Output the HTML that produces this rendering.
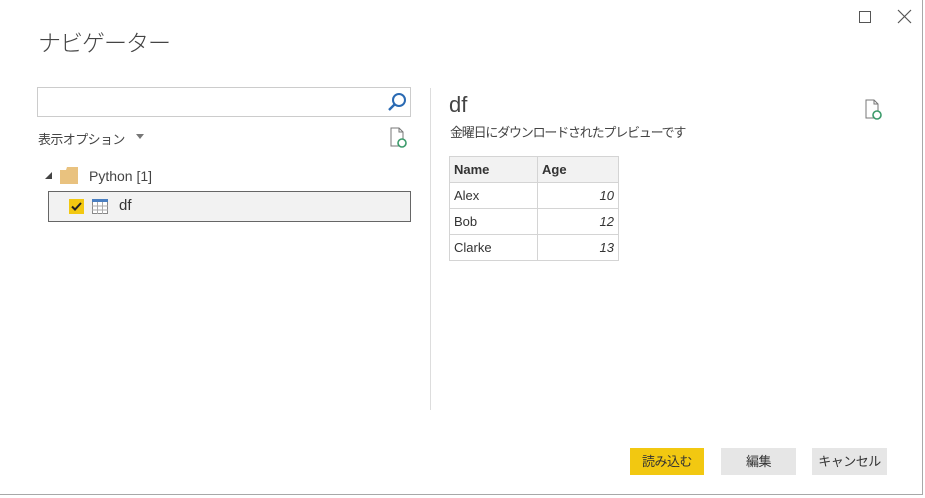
<!DOCTYPE html>
<html><head><meta charset="utf-8"><style>
*{margin:0;padding:0;box-sizing:border-box}
body{width:925px;height:498px;background:#fff;position:relative;overflow:hidden;font-family:"Liberation Sans","Noto Sans CJK JP",sans-serif;color:#333}
.a{position:absolute}
.win{left:0;top:0;width:923px;height:495px;border-right:1px solid #a8a8a8;border-bottom:1px solid #a8a8a8}
.title{left:38px;top:24px;font-size:23px;color:#444;font-weight:300;letter-spacing:-1px;white-space:nowrap}
.search{left:37px;top:87px;width:374px;height:30px;border:1px solid #ccc}
.btn{top:448px;height:27px;font-size:13px;text-align:center;line-height:27px;background:#e6e6e6;color:#333;letter-spacing:-0.5px}
table{border-collapse:collapse;font-size:13px}
td,th{border:1px solid #d4d4d4;height:26px;padding:0 4px;text-align:left}
th{background:#f2f2f2;font-weight:bold}
td.n{text-align:right;font-style:italic}
</style></head><body>
<div class="a win"></div>
<div class="a" style="left:859px;top:11px;width:12px;height:12px;border:1px solid #555"></div>
<svg class="a" style="left:897px;top:9px" width="15" height="15"><path d="M1 1L14 14M14 1L1 14" stroke="#555" stroke-width="1.2"/></svg>
<div class="a title">ナビゲーター</div>
<div class="a search"></div>
<svg class="a" style="left:387px;top:92px" width="20" height="20"><circle cx="12" cy="8" r="6" fill="none" stroke="#2a6ab3" stroke-width="2"/><path d="M8 12L2 18" stroke="#2a6ab3" stroke-width="2.4"/></svg>
<div class="a" style="left:38px;top:129px;font-size:13px;color:#444;letter-spacing:-0.6px">表示オプション</div>
<svg class="a" style="left:136px;top:134px" width="9" height="6"><path d="M0 0H8L4 5Z" fill="#777"/></svg>
<svg class="a" style="left:388px;top:127px" width="22" height="22"><path d="M3 1H11L15 5V19H3Z" fill="none" stroke="#777"/><path d="M11 1V5H15" fill="none" stroke="#777"/><circle cx="14" cy="16" r="4" fill="#fff" stroke="#3a9a6a" stroke-width="1.6"/></svg>
<svg class="a" style="left:863px;top:99px" width="22" height="22"><path d="M3 1H11L15 5V19H3Z" fill="none" stroke="#777"/><path d="M11 1V5H15" fill="none" stroke="#777"/><circle cx="14" cy="16" r="4" fill="#fff" stroke="#3a9a6a" stroke-width="1.6"/></svg>
<svg class="a" style="left:45px;top:172px" width="8" height="8"><path d="M7 0V7H0Z" fill="#444"/></svg>
<svg class="a" style="left:60px;top:167px" width="18" height="17"><path d="M0 3H6L7 0H18V17H0Z" fill="#e9c27f"/></svg>
<div class="a" style="left:89px;top:168px;font-size:14px;color:#444">Python [1]</div>
<div class="a" style="left:48px;top:191px;width:363px;height:31px;background:#f2f2f2;border:1px solid #666"></div>
<div class="a" style="left:69px;top:199px;width:15px;height:15px;background:#f2c811"></div>
<svg class="a" style="left:69px;top:199px" width="15" height="15"><path d="M3 7.5L6 10.5L12 4" fill="none" stroke="#222" stroke-width="2"/></svg>
<svg class="a" style="left:92px;top:199px" width="16" height="15"><rect x="0.5" y="0.5" width="15" height="14" fill="#fff" stroke="#888"/><rect x="0" y="0" width="16" height="3" fill="#4a7fc1"/><path d="M5.5 3V15M10.5 3V15M0 7H16M0 11H16" stroke="#aaa"/></svg>
<div class="a" style="left:119px;top:197px;font-size:15px;color:#333">df</div>
<div class="a" style="left:430px;top:88px;width:1px;height:322px;background:#ddd"></div>
<div class="a" style="left:449px;top:92px;font-size:22px;color:#444;font-weight:300">df</div>
<div class="a" style="left:450px;top:122px;font-size:13px;color:#444;letter-spacing:-1.2px;white-space:nowrap">金曜日にダウンロードされたプレビューです</div>
<table class="a" style="left:449px;top:156px;width:170px">
<tr><th style="width:88px">Name</th><th>Age</th></tr>
<tr><td>Alex</td><td class="n">10</td></tr>
<tr><td>Bob</td><td class="n">12</td></tr>
<tr><td>Clarke</td><td class="n">13</td></tr>
</table>
<div class="a btn" style="left:630px;width:74px;background:#f2c811">読み込む</div>
<div class="a btn" style="left:721px;width:75px">編集</div>
<div class="a btn" style="left:812px;width:75px">キャンセル</div>
</body></html>
